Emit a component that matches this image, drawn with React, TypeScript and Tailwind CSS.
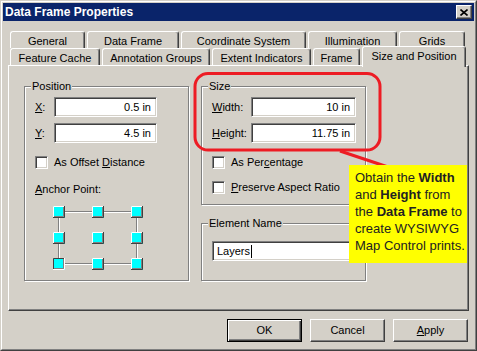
import React from 'react'

const font = { fontFamily: '"Liberation Sans", Arial, sans-serif' }

const raised =
  'border border-white border-r-[#404040] border-b-[#404040] shadow-[inset_-1px_-1px_0_#808080]'
const sunken =
  'border border-[#808080] border-r-white border-b-white shadow-[inset_1px_1px_0_#404040,inset_-1px_-1px_0_#d4d0c8]'
const etched = 'border border-[#808080] shadow-[inset_1px_1px_0_#fff,1px_1px_0_#fff]'

function Tab({ label, w, selected }: { label: string; w: number; selected?: boolean }) {
  return (
    <div
      style={{ width: w }}
      className={
        'flex items-center justify-center rounded-t-[3px] border border-white border-r-[#404040] border-b-0 bg-[#d4d0c8] shadow-[inset_-1px_0_0_#808080] ' +
        (selected ? 'relative z-10 h-[21px] -mb-[2px] pb-[2px]' : 'h-[17px] pt-[2px]')
      }
    >
      {label}
    </div>
  )
}

function GroupBox({ title, className, children }: { title: string; className: string; children?: React.ReactNode }) {
  return (
    <div className={etched + ' flex flex-col ' + className}>
      <span className="-mt-[7px] ml-[6px] w-fit bg-[#d4d0c8] px-[1px] leading-[13px]">{title}</span>
      {children}
    </div>
  )
}

function Field({ value, w }: { value: string; w: number }) {
  return (
    <div style={{ width: w }} className={sunken + ' flex h-[20px] items-center justify-end bg-white pr-[5px]'}>
      {value}
    </div>
  )
}

function Check({ children, className }: { children: React.ReactNode; className: string }) {
  return (
    <div className={'flex items-center pl-[10px] ' + className}>
      <div className={sunken + ' h-[13px] w-[13px] bg-white'} />
      <span className="ml-[6px] leading-[13px]">{children}</span>
    </div>
  )
}

function AnchorGrid() {
  const pts = [10, 49, 88].flatMap((x) => [10, 36, 62].map((y) => [x, y]))
  return (
    <svg width="100" height="72" className="ml-[24px] mt-[6px]">
      <g fill="none" strokeWidth="1">
        <path d="M10 9.5H88M10 61.5H88M9.5 10V62M87.5 10V62" stroke="#808080" />
        <path d="M10 10.5H88M10 62.5H88M10.5 10V62M88.5 10V62" stroke="#fff" />
      </g>
      {pts.map(([x, y]) => {
        const sel = x === 10 && y === 62
        const l = x - 6
        const t = y - 6
        return (
          <g key={`${x}-${y}`}>
            <rect x={l} y={t} width="12" height="12" fill="#00ffff" />
            <path d={`M${l + 0.5} ${t + 12}V${t + 0.5}H${l + 12}`} stroke={sel ? '#404040' : '#fff'} fill="none" />
            <path d={`M${l} ${t + 11.5}H${l + 11.5}V${t}`} stroke={sel ? '#fff' : '#404040'} fill="none" />
            <path d={`M${l + 1} ${t + 10.5}H${l + 10.5}V${t + 1}`} stroke="#808080" fill="none" />
          </g>
        )
      })}
    </svg>
  )
}

function Button({ children, isDefault }: { children: React.ReactNode; isDefault?: boolean }) {
  return (
    <div
      className={
        'flex h-[23px] w-[75px] items-center justify-center ' +
        (isDefault
          ? 'border border-black shadow-[inset_1px_1px_0_#fff,inset_-1px_-1px_0_#404040,inset_-2px_-2px_0_#808080]'
          : raised)
      }
    >
      {children}
    </div>
  )
}

export default function App() {
  return (
    <div style={font} className="relative h-[351px] w-[477px] overflow-hidden text-[11px] text-black">
      <div className="h-full border border-[#d4d0c8] border-r-[#404040] border-b-[#404040] bg-[#d4d0c8]">
        <div className="h-full border border-white border-r-[#808080] border-b-[#808080] p-[1px]">
          {/* title bar */}
          <div className="flex h-[18px] items-center justify-between bg-[#0a246a] pl-[2px] pr-[2px]">
            <span className="text-[12px] font-bold text-white">Data Frame Properties</span>
            <div className={raised + ' flex h-[14px] w-[16px] items-center justify-center bg-[#d4d0c8]'}>
              <svg width="8" height="7" viewBox="0 0 8 7">
                <path d="M0.5 0.5L7.5 6.5M7.5 0.5L0.5 6.5" stroke="#000" strokeWidth="1.6" />
              </svg>
            </div>
          </div>

          <div className="px-[5px]">
            {/* tabs */}
            <div className="mt-[10px] flex gap-[2px] pl-[2px]">
              <Tab label="General" w={75} />
              <Tab label="Data Frame" w={92} />
              <Tab label="Coordinate System" w={125} />
              <Tab label="Illumination" w={89} />
              <Tab label="Grids" w={66} />
            </div>
            <div className="flex h-[17px] items-end gap-[2px] pl-[2px]">
              <Tab label="Feature Cache" w={90} />
              <Tab label="Annotation Groups" w={108} />
              <Tab label="Extent Indicators" w={99} />
              <Tab label="Frame" w={47} />
              <Tab label="Size and Position" w={104} selected />
            </div>

            {/* panel */}
            <div className={raised + ' flex h-[246px] gap-[12px] pl-[15px] pt-[20px]'}>
              <GroupBox title="Position" className="h-[195px] w-[165px]">
                <div className="mt-[4px] flex items-center pl-[10px]">
                  <span className="w-[19px]">
                    <u>X</u>:
                  </span>
                  <Field value="0.5 in" w={103} />
                </div>
                <div className="mt-[6px] flex items-center pl-[10px]">
                  <span className="w-[19px]">
                    <u>Y</u>:
                  </span>
                  <Field value="4.5 in" w={103} />
                </div>
                <Check className="mt-[13px]">
                  As Offset <u>D</u>istance
                </Check>
                <span className="ml-[10px] mt-[14px] leading-[13px]">
                  <u>A</u>nchor Point:
                </span>
                <AnchorGrid />
              </GroupBox>

              <div className="flex flex-col">
                <GroupBox title="Size" className="h-[119px] w-[165px]">
                  <div className="mt-[4px] flex items-center pl-[10px]">
                    <span className="w-[39px]">
                      <u>W</u>idth:
                    </span>
                    <Field value="10 in" w={105} />
                  </div>
                  <div className="mt-[6px] flex items-center pl-[10px]">
                    <span className="w-[39px]">
                      <u>H</u>eight:
                    </span>
                    <Field value="11.75 in" w={105} />
                  </div>
                  <Check className="mt-[13px]">
                    As Per<u>c</u>entage
                  </Check>
                  <Check className="mt-[12px]">
                    <u>P</u>reserve Aspect Ratio
                  </Check>
                </GroupBox>

                <GroupBox title="Element Name" className="mt-[18px] h-[58px] w-[165px]">
                  <div
                    className={sunken + ' ml-[10px] mt-[11px] flex h-[20px] w-[143px] items-center bg-white pl-[4px]'}
                  >
                    Layers<span className="ml-[1px] inline-block h-[13px] w-[1px] bg-black" />
                  </div>
                </GroupBox>
              </div>
            </div>

            {/* buttons */}
            <div className="mt-[8px] flex justify-end gap-[8px] pr-[1px]">
              <Button isDefault>OK</Button>
              <Button>Cancel</Button>
              <Button>
                <span>
                  <u>A</u>pply
                </span>
              </Button>
            </div>
          </div>
        </div>
      </div>

      {/* annotation callout */}
      <svg width="477" height="351" className="pointer-events-none absolute left-0 top-0">
        <rect x="195" y="73.5" width="185" height="76.5" rx="13" fill="none" stroke="#ed1c24" strokeWidth="3" />
        <path d="M340 151L388 167" stroke="#ed1c24" strokeWidth="3" />
      </svg>
      <div className="absolute left-[349px] top-[165px] h-[98px] w-[118px] whitespace-nowrap bg-[#ffff00] pl-[6px] pt-[4px] text-[13px] leading-[17px] text-[#222]">
        Obtain the <b>Width</b>
        <br />
        and <b>Height</b> from
        <br />
        the <b>Data Frame</b> to
        <br />
        create WYSIWYG
        <br />
        Map Control prints.
      </div>
    </div>
  )
}
